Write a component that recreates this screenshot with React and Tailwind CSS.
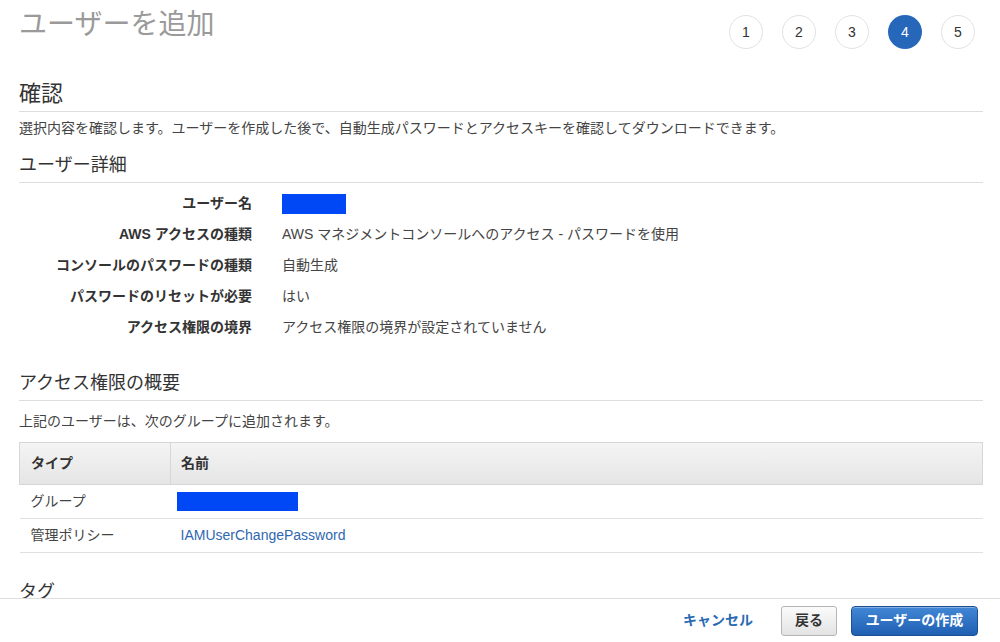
import React from 'react'

const font = { fontFamily: '"Liberation Sans", "Noto Sans CJK JP", sans-serif' }

const details = [
    { label: 'ユーザー名', value: null },
    { label: 'AWS アクセスの種類', value: 'AWS マネジメントコンソールへのアクセス - パスワードを使用' },
    { label: 'コンソールのパスワードの種類', value: '自動生成' },
    { label: 'パスワードのリセットが必要', value: 'はい' },
    { label: 'アクセス権限の境界', value: 'アクセス権限の境界が設定されていません' },
]

function Steps({ active }) {
    return (
        <div className="flex gap-[19px] mt-[15px] mr-[8px]">
            {[1, 2, 3, 4, 5].map(n => (
                <div
                    key={n}
                    className={`w-[34px] h-[34px] rounded-full flex items-center justify-center text-[14px] ${n === active ? 'bg-[#2767b9] text-white' : 'border border-[#e2e2e2] text-[#333]'}`}
                >
                    {n}
                </div>
            ))}
        </div>
    )
}

export default function App() {
    return (
        <div className="h-[642px] flex flex-col bg-white text-[#444]" style={font}>
            <div className="flex-1 overflow-hidden px-[19px] pr-[17px]">
                {/* Header */}
                <div className="flex justify-between items-start h-[79px]">
                    <h1 className="text-[28px] leading-[36px] mt-[7px] text-[#9a9a9a]">ユーザーを追加</h1>
                    <Steps active={4} />
                </div>

                {/* 確認 */}
                <h2 className="text-[22px] leading-[30px] text-[#333] pb-[2px] border-b border-[#dddddd]">確認</h2>
                <p className="text-[14px] leading-[20px] mt-[6px]">
                    選択内容を確認します。ユーザーを作成した後で、自動生成パスワードとアクセスキーを確認してダウンロードできます。
                </p>

                {/* ユーザー詳細 */}
                <h3 className="text-[18px] leading-[26px] text-[#333] mt-[14px] pb-[4px] border-b border-[#dddddd]">ユーザー詳細</h3>
                <div className="mt-[5px]">
                    {details.map(d => (
                        <div key={d.label} className="flex items-center h-[31px] text-[14px]">
                            <div className="w-[233px] text-right font-bold text-[#333]">{d.label}</div>
                            <div className="ml-[30px]">
                                {d.value ?? <div className="w-[64px] h-[20px] bg-[#0047f5]" />}
                            </div>
                        </div>
                    ))}
                </div>

                {/* アクセス権限の概要 */}
                <h3 className="text-[18px] leading-[26px] text-[#333] mt-[27px] pb-[4px] border-b border-[#dddddd]">アクセス権限の概要</h3>
                <p className="text-[14px] leading-[20px] mt-[10px]">上記のユーザーは、次のグループに追加されます。</p>

                <table className="w-full mt-[11px] text-[14px] border-collapse">
                    <thead>
                        <tr className="h-[42px] bg-gradient-to-b from-[#f4f4f4] to-[#e5e5e5] text-[#333] font-bold">
                            <th className="w-[151px] text-left pl-[11px] border border-[#d6d6d6]">タイプ</th>
                            <th className="text-left pl-[10px] border border-[#d6d6d6] border-l-[#e2e2e2]">名前</th>
                        </tr>
                    </thead>
                    <tbody>
                        <tr className="h-[34px] border-b border-[#e0e0e0]">
                            <td className="pl-[11px]">グループ</td>
                            <td className="pl-[6px]">
                                <div className="w-[121px] h-[19px] bg-[#0047f5]" />
                            </td>
                        </tr>
                        <tr className="h-[34px] border-b border-[#e0e0e0]">
                            <td className="pl-[11px]">管理ポリシー</td>
                            <td className="pl-[10px] text-[#2f67b0]">IAMUserChangePassword</td>
                        </tr>
                    </tbody>
                </table>

                <h3 className="text-[18px] leading-[26px] text-[#333] mt-[26px]">タグ</h3>
            </div>

            {/* Footer */}
            <div className="h-[44px] shrink-0 border-t border-[#dddddd] bg-white flex items-center justify-end pr-[22px]">
                <button className="text-[14px] font-bold text-[#2a6ab3] mr-[28px]">キャンセル</button>
                <button className="w-[56px] h-[30px] rounded-[3px] border border-[#b5b5b5] bg-gradient-to-b from-[#fbfbfb] to-[#e3e3e3] text-[14px] font-bold text-[#333] mr-[14px]">
                    戻る
                </button>
                <button className="w-[127px] h-[30px] rounded-[4px] border border-[#1c4f92] bg-gradient-to-b from-[#4287d6] to-[#1f5fb2] text-[14px] font-bold text-white shadow-[inset_0_1px_0_rgba(255,255,255,0.35)]">
                    ユーザーの作成
                </button>
            </div>
        </div>
    )
}
